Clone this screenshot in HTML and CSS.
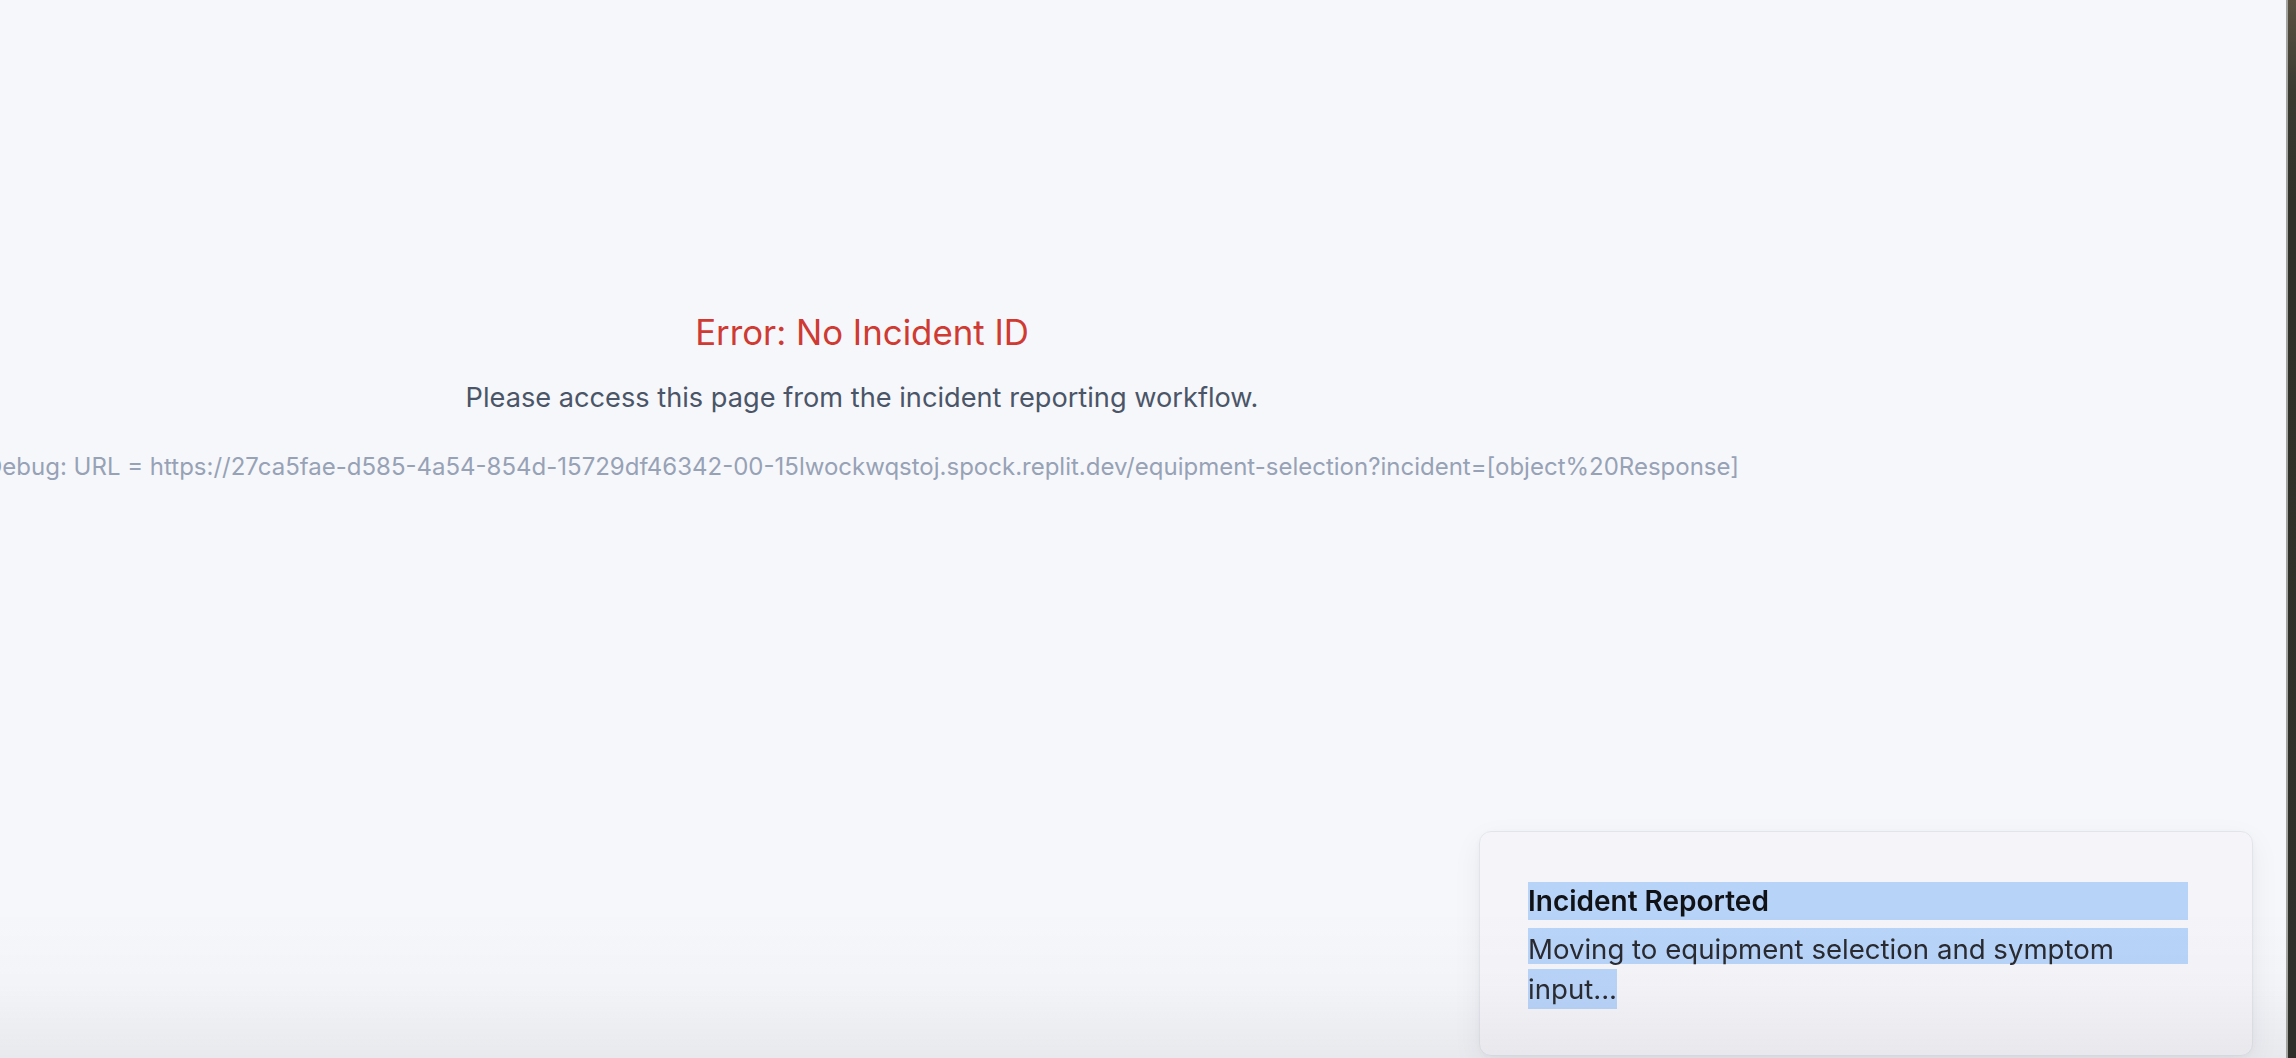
FILE: index.html
```html
<!DOCTYPE html>
<html lang="en">
<head>
<meta charset="utf-8">
<title>Equipment Selection</title>
<link rel="stylesheet" href="styles.css">
</head>
<body>
<div class="window">
  <div class="app">
    <main class="main">
      <h1 class="error-title">Error: No Incident ID</h1>
      <p class="error-text">Please access this page from the incident reporting workflow.</p>
      <p class="debug">Debug: URL = https://27ca5fae-d585-4a54-854d-15729df46342-00-15lwockwqstoj.spock.replit.dev/equipment-selection?incident=[object%20Response]</p>
    </main>
    <div class="toast">
      <div class="toast-title">Incident Reported</div>
      <div class="toast-desc">Moving to equipment selection and symptom <span class="last-line">input...</span></div>
    </div>
    <div class="bottom-shade"></div>
  </div>
  <div class="edge"></div>
</div>
</body>
</html>
```
FILE: styles.css
```css
* { box-sizing: border-box; }
html, body {
  margin: 0;
  padding: 0;
  height: 100%;
  overflow: hidden;
}
body {
  font-family: Inter, "Noto Sans", "Liberation Sans", sans-serif;
  background: #2f3129;
}
.window {
  display: flex;
  height: 1058px;
  width: 2296px;
}
.app {
  width: 2286px;
  height: 100%;
  background: #f6f7fa;
  overflow: hidden;
}
.main {
  width: 1724px;
  padding-top: 304px;
  display: flex;
  flex-direction: column;
  align-items: center;
  text-align: center;
}
.error-title {
  margin: 0 0 18px;
  font-size: 34.8px;
  line-height: 56px;
  font-weight: 400;
  color: #cf3a32;
  white-space: nowrap;
}
.error-text {
  margin: 0;
  font-size: 27.2px;
  line-height: 40px;
  color: #4a5568;
  white-space: nowrap;
}
.debug {
  margin: 33px 0 0;
  font-size: 24px;
  line-height: 32px;
  color: #97a2b6;
  white-space: nowrap;
}
.toast {
  position: fixed;
  left: 1479px;
  top: 831px;
  width: 774px;
  padding: 50px 64px 46px 48px;
  background: #f5f5f9;
  border: 1px solid #e1e5eb;
  border-radius: 12px;
  box-shadow: 0 10px 30px rgba(30, 40, 60, 0.06), 0 2px 8px rgba(30, 40, 60, 0.04);
  display: flex;
  flex-direction: column;
  gap: 8px;
}
.toast-title {
  font-size: 28px;
  line-height: 38px;
  font-weight: 600;
  color: #111216;
  background: #b7d3f8;
}
.toast-desc {
  font-size: 27.6px;
  line-height: 40px;
  color: #2a2b30;
  padding-top: 1px;
  background: linear-gradient(#b9d4f9, #b9d4f9) no-repeat 0 0 / 100% 36px;
}
.last-line {
  display: inline-block;
  background: #b9d4f9;
  line-height: 40px;
}
.bottom-shade {
  position: fixed;
  left: 0;
  bottom: 0;
  width: 2286px;
  height: 150px;
  pointer-events: none;
  background: linear-gradient(to bottom, rgba(60, 70, 90, 0) 0%, rgba(60, 70, 90, 0.015) 50%, rgba(60, 60, 80, 0.07) 100%);
}
.edge {
  width: 10px;
  height: 100%;
  border-left: 2px solid #a3a3a0;
  background: linear-gradient(to bottom, #5b5242 0, #3a3a31 90px, #30322a 200px, #2e3029 100%);
}
```
